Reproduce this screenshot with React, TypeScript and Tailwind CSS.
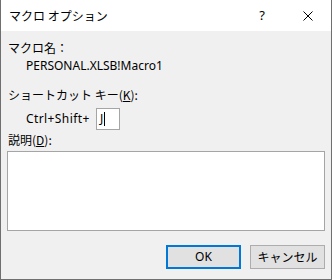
const App = () => {
  return (
    <div className="w-[332px] h-[280px] bg-[#f0f0f0] border-x border-b border-[#6f6f6f] flex flex-col text-[12px] text-black font-[family-name:'Noto_Sans','Noto_Sans_CJK_JP',sans-serif]">
      <div className="h-[31px] shrink-0 bg-white flex items-center">
        <span className="pl-[8px] font-[family-name:'Noto_Sans_CJK_JP',sans-serif]">マクロ オプション</span>
        <div className="ml-auto w-[46px] h-full flex items-center justify-center text-[13px]">?</div>
        <div className="w-[46px] h-full flex items-center justify-center">
          <svg width="10" height="10" viewBox="0 0 10 10">
            <path d="M0.5 0.5 L9.5 9.5 M9.5 0.5 L0.5 9.5" stroke="#000" strokeWidth="1" />
          </svg>
        </div>
      </div>

      <div className="mt-[9px] h-[16px] pl-[7px] flex items-center font-[family-name:'Noto_Sans_CJK_JP',sans-serif]">
        マクロ名：
      </div>
      <div className="mt-[2px] h-[16px] pl-[25px] flex items-center">
        PERSONAL.XLSB!Macro1
      </div>

      <div className="mt-[13px] h-[16px] pl-[7px] flex items-center font-[family-name:'Noto_Sans_CJK_JP',sans-serif]">
        ショートカット キー(<u>K</u>):
      </div>
      <div className="mt-[5px] h-[22px] pl-[25px] flex items-center">
        <span className="w-[70px] tracking-[0.4px]">Ctrl+Shift+</span>
        <div className="w-[24px] h-[22px] bg-white border border-[#a5a5a5] flex items-center pl-[3px]">
          <span>J</span>
          <span className="w-px h-[14px] bg-black ml-px"></span>
        </div>
      </div>

      <div className="mt-[2px] h-[16px] pl-[7px] flex items-center font-[family-name:'Noto_Sans_CJK_JP',sans-serif]">
        説明(<u>D</u>):
      </div>
      <div className="mt-[3px] mx-[6px] h-[80px] bg-white border border-[#a5a5a5]"></div>

      <div className="mt-[14px] flex justify-end gap-[9px] pr-[6px]">
        <button className="w-[75px] h-[24px] bg-[#e1e1e1] border-2 border-[#0078d7] flex items-center justify-center">
          OK
        </button>
        <button className="w-[75px] h-[24px] bg-[#e1e1e1] border border-[#adadad] flex items-center justify-center font-[family-name:'Noto_Sans_CJK_JP',sans-serif]">
          キャンセル
        </button>
      </div>
    </div>
  );
};

export default App;
